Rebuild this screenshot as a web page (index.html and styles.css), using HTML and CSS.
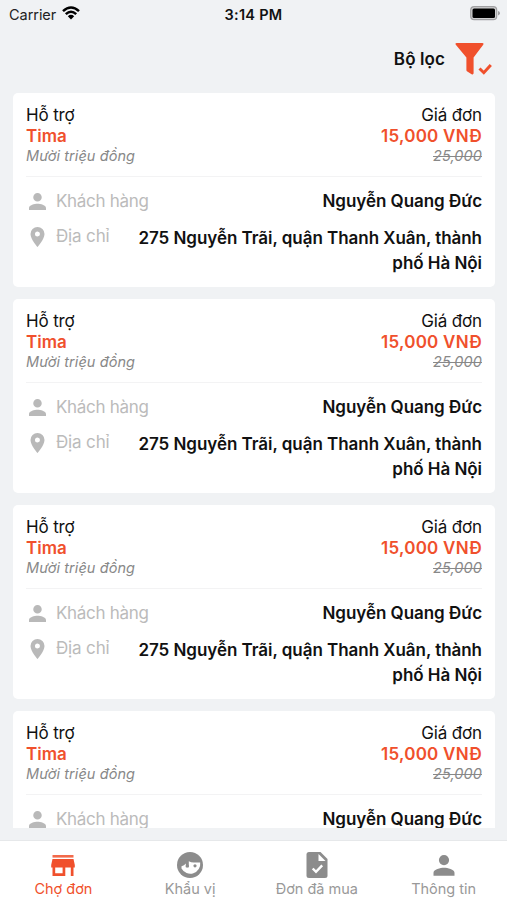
FILE: index.html
```html
<!DOCTYPE html>
<html lang="vi">
<head>
<meta charset="utf-8">
<title>Chợ đơn</title>
<link rel="stylesheet" href="styles.css">
</head>
<body>
<svg class="defs" aria-hidden="true">
  <symbol id="person" viewBox="4 4 16 16"><path d="M12 12a4 4 0 1 0 0-8 4 4 0 0 0 0 8zm0 2c-2.700 0-8 1.300-8 4v2h16v-2c0-2.700-5.300-4-8-4z"/></symbol>
  <symbol id="pin" viewBox="5 2 14 20"><path fill-rule="evenodd" d="M12 2a7 7 0 0 0-7 7c0 5.250 7 13 7 13s7-7.750 7-13a7 7 0 0 0-7-7zm0 9.500a2.500 2.500 0 1 1 0-5 2.500 2.500 0 0 1 0 5z"/></symbol>
</svg>
<div class="app">
  <div class="status">
    <div class="carrier"><span>Carrier</span>
      <svg class="wifi" viewBox="0 0 18 14"><path fill="none" stroke="#000" stroke-width="2.500" d="M1 5.200Q9-2.300 17 5.200M3.800 8.200Q9 3.300 14.200 8.200"/><path d="M5.800 10.200Q9 7.300 12.200 10.200L9 13.500z"/></svg>
    </div>
    <span class="time">3:14 PM</span>
    <svg class="battery" viewBox="0 0 30 15"><rect x=".7" y=".7" width="26" height="13" rx="3.500" fill="#d0d0d1" stroke="#a0a0a2" stroke-width="1.200"/><rect x="2.500" y="2.500" width="22.500" height="9.500" rx="1.500"/><path fill="#a0a0a2" d="M28 5q2 .6 2 2.200t-2 2.200z"/></svg>
  </div>
  <header class="header">
    <span class="filter-label">Bộ lọc</span>
    <svg class="filter" viewBox="0 0 37 34"><path fill="#f0502c" d="M1.800 1h25.400q2 0 1 1.800L18.600 15.500v15.600q0 2-2 1.200l-4.300-2.700q-.9-.6-.9-1.600V15.500L.8 2.800Q-.2 1 1.800 1z"/><path fill="none" stroke="#f0502c" stroke-width="3" d="M24.500 26.500l4.300 4.200 7-7.700"/></svg>
  </header>
  <main class="list">
    <article class="card">
      <div class="top"><div><p class="title">Hỗ trợ</p><p class="strong">Tima</p><p class="note">Mười triệu đồng</p></div><div class="right"><p class="title">Giá đơn</p><p class="strong price">15,000 VNĐ</p><p class="note"><s>25,000</s></p></div></div>
      <div class="row"><svg class="ic-person"><use href="#person"/></svg><span class="label">Khách hàng</span><span class="value">Nguyễn Quang Đức</span></div>
      <div class="row address"><svg class="ic-pin"><use href="#pin"/></svg><span class="label">Địa chỉ</span><span class="value">275 Nguyễn Trãi, quận Thanh Xuân, thành<br>phố Hà Nội</span></div>
    </article>
    <article class="card">
      <div class="top"><div><p class="title">Hỗ trợ</p><p class="strong">Tima</p><p class="note">Mười triệu đồng</p></div><div class="right"><p class="title">Giá đơn</p><p class="strong price">15,000 VNĐ</p><p class="note"><s>25,000</s></p></div></div>
      <div class="row"><svg class="ic-person"><use href="#person"/></svg><span class="label">Khách hàng</span><span class="value">Nguyễn Quang Đức</span></div>
      <div class="row address"><svg class="ic-pin"><use href="#pin"/></svg><span class="label">Địa chỉ</span><span class="value">275 Nguyễn Trãi, quận Thanh Xuân, thành<br>phố Hà Nội</span></div>
    </article>
    <article class="card">
      <div class="top"><div><p class="title">Hỗ trợ</p><p class="strong">Tima</p><p class="note">Mười triệu đồng</p></div><div class="right"><p class="title">Giá đơn</p><p class="strong price">15,000 VNĐ</p><p class="note"><s>25,000</s></p></div></div>
      <div class="row"><svg class="ic-person"><use href="#person"/></svg><span class="label">Khách hàng</span><span class="value">Nguyễn Quang Đức</span></div>
      <div class="row address"><svg class="ic-pin"><use href="#pin"/></svg><span class="label">Địa chỉ</span><span class="value">275 Nguyễn Trãi, quận Thanh Xuân, thành<br>phố Hà Nội</span></div>
    </article>
    <article class="card">
      <div class="top"><div><p class="title">Hỗ trợ</p><p class="strong">Tima</p><p class="note">Mười triệu đồng</p></div><div class="right"><p class="title">Giá đơn</p><p class="strong price">15,000 VNĐ</p><p class="note"><s>25,000</s></p></div></div>
      <div class="row"><svg class="ic-person"><use href="#person"/></svg><span class="label">Khách hàng</span><span class="value">Nguyễn Quang Đức</span></div>
    </article>
  </main>
  <nav class="tabs">
    <a class="tab active"><svg viewBox="0 0 28 28"><path fill-opacity=".85" d="M3.500 4h21v2.600h-21z"/><path fill-rule="evenodd" d="M3.500 8h21l1.300 6v2.600h-1.300V25h-2.700v-8.400h-5.500V25H3.500v-8.400H2.200V14zM6.200 16.600v5.700h7.400v-5.700z"/></svg><span>Chợ đơn</span></a>
    <a class="tab"><svg viewBox="0 0 28 28"><circle cx="14" cy="14" r="13"/><path fill="#fff" d="M5.500 15.200Q8.300 14.800 9.800 12.500V16.300h3V10.200q2.600 1.600 6.200 1.300h5.200A10 9.800 0 0 1 5.500 17.500z"/><circle cx="11.300" cy="15" r="1.600"/><circle cx="19" cy="14.800" r="1.600"/></svg><span>Khẩu vị</span></a>
    <a class="tab"><svg viewBox="0 0 28 28"><path d="M6 1h11.500L24.500 8v16.500q0 2.500-2.500 2.500H6q-2.500 0-2.500-2.500v-21Q3.500 1 6 1z"/><path fill="#fff" d="M15.500 3v7h7z"/><path fill="none" stroke="#fff" stroke-width="2.400" d="M9.700 17.500l3.300 3.300 6.200-6.400"/></svg><span>Đơn đã mua</span></a>
    <a class="tab"><svg viewBox="0 0 28 28"><path d="M14 14.200a5.100 5.100 0 1 0 0-10.200 5.100 5.100 0 0 0 0 10.200zm0 2.500c-3.500 0-10.500 1.500-10.500 5v3h21v-3c0-3.500-7-5-10.500-5z"/></svg><span>Thông tin</span></a>
  </nav>
</div>
</body>
</html>
```
FILE: styles.css
```css
* { box-sizing: border-box; }
body { margin: 0; background: #f0f2f4; font-family: Inter, "Noto Sans", sans-serif; color: #111; }
p { margin: 0; }
.defs { display: none; }
.app { height: 900px; display: flex; flex-direction: column; overflow: hidden; }
.status { height: 28px; flex: none; display: grid; grid-template-columns: 1fr auto 1fr; align-items: center; padding: 0 7px 0 9px; font-size: 14.500px; }
.carrier { display: flex; align-items: center; gap: 6px; color: #222; letter-spacing: -.05px; }
.wifi { width: 18px; height: 14px; margin-top: -2px; }
.time { font-weight: 600; letter-spacing: .25px; margin-left: -2px; }
.battery { width: 30px; height: 15px; justify-self: end; margin-top: -1px; }
.header { height: 65px; flex: none; display: flex; justify-content: flex-end; align-items: flex-start; padding: 14px 15px 0 0; gap: 10px; }
.filter-label { font-size: 17px; font-weight: 600; line-height: 34px; letter-spacing: .1px; }
.filter { width: 37px; height: 34px; }
.list { height: 735px; flex: none; overflow: hidden; padding: 0 12px 0 13px; }
.card { height: 194px; margin-bottom: 12px; background: #fff; border-radius: 5px; padding: 12px 13px 0; }
.top { display: flex; justify-content: space-between; height: 72px; border-bottom: 1px solid #f3f3f4; }
.right { text-align: right; }
.title { font-size: 17px; line-height: 21px; letter-spacing: -.15px; }
.strong { font-size: 17px; line-height: 20px; font-weight: 600; color: #f0502c; }
.price { letter-spacing: .25px; }
.note { font-size: 14.500px; line-height: 20px; font-style: italic; color: #888; letter-spacing: .08px; }
.row { display: flex; margin-top: 12px; font-size: 17px; line-height: 24px; fill: #b9b9b9; }
.label { color: #bbb; letter-spacing: -.3px; }
.value { margin-left: auto; text-align: right; font-weight: 600; letter-spacing: -.04px; }
.ic-person { width: 17px; height: 17px; margin: 4px 10px 0 3px; }
.ic-pin { width: 15px; height: 20px; margin: 1px 11px 0 4px; }
.address { margin-top: 13px; }
.address .label { margin-top: -2px; letter-spacing: -.15px; }
.address .value { line-height: 24.500px; }
.tabs { margin-top: 12px; height: 60px; flex: none; display: grid; grid-template-columns: repeat(4, 1fr); background: #fff; border-top: 1px solid #e6e8ea; }
.tab { display: flex; flex-direction: column; align-items: center; padding-top: 10px; color: #999; fill: #8c8c8c; font-size: 14.500px; line-height: 20px; }
.tab svg { width: 28px; height: 28px; }
.active { color: #f0502c; fill: #f0502c; }
```
